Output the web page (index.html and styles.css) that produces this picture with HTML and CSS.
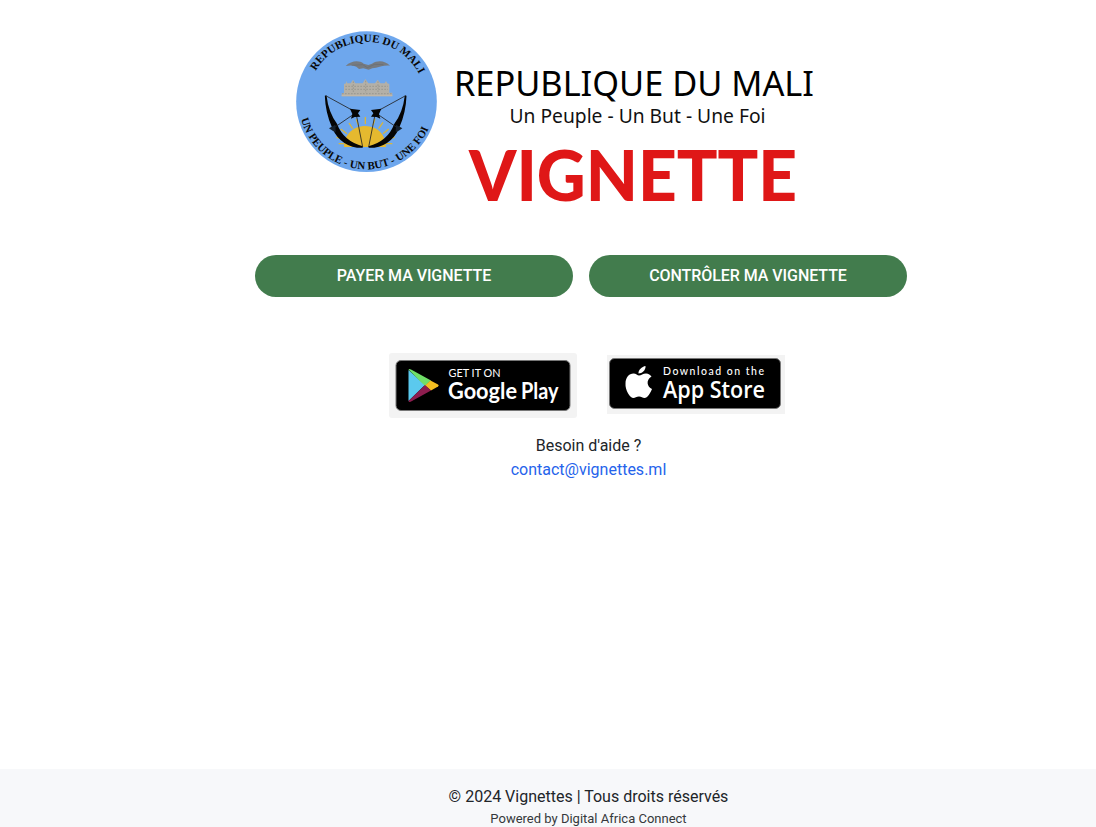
FILE: index.html
```
<!DOCTYPE html>
<html lang="fr">
<head>
<meta charset="utf-8">
<title>Vignettes</title>
<link rel="stylesheet" href="styles.css">
</head>
<body>
<main class="content">
  <svg class="banner" viewBox="0 0 540 200" role="img" aria-label="République du Mali">
    <defs>
      <path id="arc-top" d="M89 153A177 177 0 0 1 401 166"/>
      <path id="arc-bottom" d="M45 297A203 203 0 0 0 429 322"/>
      <g id="bow">
        <path d="M119 227C124 270 136 293 151 313C164 348 190 371 230 381C190 382 157 361 141 323C126 290 120 260 119 227Z" fill="#050505" stroke="#050505" stroke-width="5"/>
        <path d="M119 227L205 274M211 284L230 381M207 280L140 326" fill="none" stroke="#222" stroke-width="2.500"/>
        <path d="M192 266L223 270L216 280L223 290L206 291L195 296L199 282Z" fill="#050505"/>
        <path d="M129 325L148 314L149 337L141 333Z" fill="#15202c"/>
      </g>
    </defs>
    <g transform="scale(.33333)">
      <circle cx="241.500" cy="245" r="211" fill="#6ea7ed"/>
      <g class="seal-text">
        <text textLength="378" lengthAdjust="spacingAndGlyphs"><textPath href="#arc-top" textLength="378" lengthAdjust="spacingAndGlyphs">REPUBLIQUE DU MALI</textPath></text>
        <text textLength="502" lengthAdjust="spacingAndGlyphs"><textPath href="#arc-bottom" textLength="502" lengthAdjust="spacingAndGlyphs">UN PEUPLE - UN BUT - UNE FOI</textPath></text>
      </g>
      <path d="M179 138C196 122 219 120 233 131L247 135L258 131C277 119 298 123 312 137C293 135 284 141 270 143L259 145L248 149L232 145L219 147L211 140C200 135 190 136 179 138Z" fill="#767b81"/>
      <path d="M197 136L230 134L244 143L266 133L292 134" stroke="#686d73" stroke-width="2" fill="none"/>
      <path d="M174 219V192L180 190V183L184 190H194L201 179L208 190H230L238 177L247 190H267L275 179L283 190H296L300 183L304 190L310 192V218H319V229H167V219Z" fill="#b4b0a7"/>
      <path d="M178 199H306M178 208H306M168 221H319M202 184V219M239 182V219M276 184V219" stroke="#8d8b83" stroke-width="2" stroke-dasharray="5 4" fill="none"/>
      <path d="M167 227H319" stroke="#c4b9a8" stroke-width="3"/>
      <path d="M174 381C174 343 202 318 238 318C274 318 299 343 300 381Z" fill="#e5b92f"/>
      <path d="M238 312V291M217 316L211 298M261 316L267 296M200 326L189 309M278 326L291 307M183 341L164 327M291 341L308 327M176 357L151 352M298 357L326 352M300 371H319M174 371H158" stroke="#d9b63c" stroke-width="4"/>
      <use href="#bow"/>
      <use href="#bow" transform="matrix(-1 0 0 1 478 0)"/>
    </g>
    <text class="country" x="168" y="75.500" textLength="360" lengthAdjust="spacingAndGlyphs">REPUBLIQUE DU MALI</text>
    <text class="motto" x="223.500" y="103" textLength="256" lengthAdjust="spacingAndGlyphs">Un Peuple - Un But - Une Foi</text>
    <text class="brand" x="183" y="180.500" textLength="328" lengthAdjust="spacingAndGlyphs">VIGNETTE</text>
  </svg>
  <div class="actions">
    <a class="button">PAYER MA VIGNETTE</a>
    <a class="button">CONTRÔLER MA VIGNETTE</a>
  </div>
  <div class="stores">
    <svg class="play" viewBox="0 0 188 65">
      <rect width="188" height="65" rx="3" fill="#f3f3f3"/>
      <rect x="7" y="7.500" width="174" height="50" rx="5" fill="#000" stroke="#777"/>
      <path d="M19.500 17V48L36 32Z" fill="#5bc9ee"/>
      <path d="M19.500 16.500Q20 15.500 22 16.500L42 27.500L36 33Z" fill="#70df68"/>
      <path d="M41.500 27.500L49 31.500Q50.500 32.500 49 33.500L42 37.500L36 32.500Z" fill="#f4bf20"/>
      <path d="M19.500 48Q20 50 23 48L42 37.500L36 32Z" fill="#8d1d4f"/>
      <text class="play-small" x="59.500" y="24" textLength="52" lengthAdjust="spacingAndGlyphs">GET IT ON</text>
      <text class="play-name" x="59" y="45.500" textLength="69" lengthAdjust="spacingAndGlyphs">Google</text>
      <text class="play-name" x="132" y="45.500" textLength="37.500" lengthAdjust="spacingAndGlyphs">Play</text>
    </svg>
    <svg class="apple" viewBox="0 0 178 59">
      <rect width="178" height="59" fill="#f3f3f3"/>
      <rect x="2.500" y="3.500" width="171" height="50" rx="5" fill="#000" stroke="#777"/>
      <path d="M38.500 11C39 15 35 18.500 31.500 18.500C31 15 35 11.500 38.500 11Z" fill="#fff"/>
      <path d="M32 20.500C34 20.500 36 18.500 39 18.500C41.500 18.500 43.500 20 44.500 21.500C38.500 25 40 32 45 34C43.500 38 40.500 43 37.500 43C35.500 43 34.500 41.500 32 41.500C29.500 41.500 28 43 26.500 43C23 43 18 35 18.500 28.500C18.500 22.500 22 18.500 26.500 18.500C29 18.500 30.500 20.500 32 20.500Z" fill="#fff"/>
      <text class="apple-small" x="56" y="20" textLength="101" lengthAdjust="spacing">Download on the</text>
      <text class="apple-name" x="56" y="43" textLength="102" lengthAdjust="spacingAndGlyphs">App Store</text>
    </svg>
  </div>
  <div class="help">
    <div>Besoin d'aide ?</div>
    <a class="mail">contact@vignettes.ml</a>
  </div>
</main>
<footer class="footer">
  <div>© 2024 Vignettes | Tous droits réservés</div>
  <div class="powered">Powered by Digital Africa Connect</div>
</footer>
</body>
</html>
```
FILE: styles.css
```
* { box-sizing: border-box; }
body {
  margin: 0;
  height: 827px;
  overflow: hidden;
  display: flex;
  flex-direction: column;
  background: #fff;
  color: #212529;
  font: 16px/24px Roboto, sans-serif;
}
.content {
  flex: 1;
  display: flex;
  flex-direction: column;
  padding-top: 20px;
}
.banner { width: 540px; height: 200px; margin-left: 286px; }
.seal-text { font: bold 33px "Liberation Serif", serif; fill: #080808; }
.country { font: 35px "Noto Sans", sans-serif; fill: #000; }
.motto { font: 19.5px "Noto Sans", sans-serif; fill: #111; }
.brand { font: 900 71px Lato, sans-serif; fill: #df1717; }
.actions { display: flex; gap: 16px; margin: 35px 0 0 255px; }
.button {
  width: 318px;
  height: 42px;
  border-radius: 21px;
  background: #427c4d;
  color: #fff;
  font-weight: 500;
  letter-spacing: -0.06px;
  line-height: 41px;
  text-align: center;
}
.stores {
  display: flex;
  align-items: flex-start;
  gap: 30px;
  margin: 56px 0 0 389px;
}
.play { width: 188px; height: 65px; }
.apple { width: 178px; height: 59px; margin-top: 2px; }
.play text, .apple text { fill: #fff; }
.play-small { font: 11px Lato, sans-serif; }
.play-name { font: 700 22px Lato, sans-serif; }
.apple-small { font: 500 10.5px Lato, sans-serif; }
.apple-name { font: 600 23px "Open Sans", sans-serif; }
.help { margin: 16px 0 0 81px; text-align: center; width: 1015px; }
.mail { color: #2563eb; }
.footer {
  height: 58px;
  padding: 16px 0 0 81px;
  background: #f7f8fa;
  text-align: center;
}
.powered { font-size: 13px; line-height: 20px; color: #35383b; }
```
